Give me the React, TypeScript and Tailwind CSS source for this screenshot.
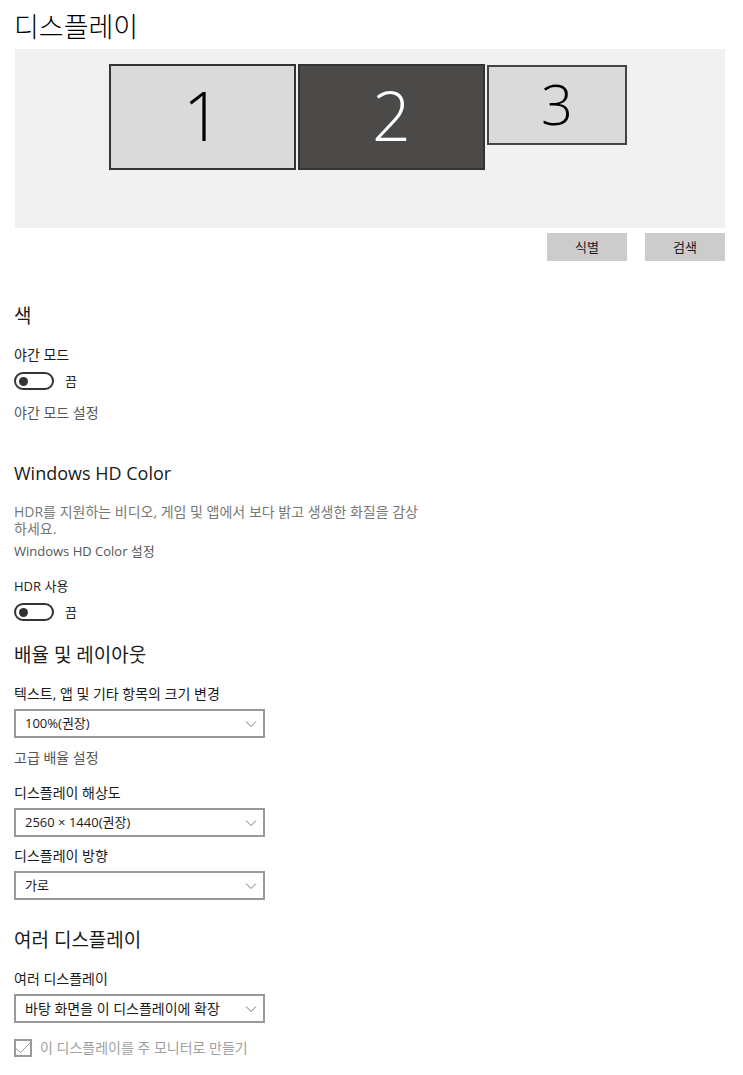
import { useState } from "react";
import type { ReactNode } from "react";

function SectionTitle({ children, className = "text-[19px]" }: { children: ReactNode; className?: string }) {
    return <h2 className={`${className} leading-7 text-[#1a1a1a]`}>{children}</h2>;
}

function Toggle({ id, label, labelClass = "text-sm" }: { id: string; label: string; labelClass?: string }) {
    const [on, setOn] = useState(false);

    return (
        <div>
            <label htmlFor={id} className={`${labelClass} block leading-5`}>{label}</label>
            <div className="mt-[7px] flex h-[18px] items-center gap-[11px]">
                <input
                    id={id}
                    type="checkbox"
                    role="switch"
                    checked={on}
                    onChange={(e) => setOn(e.target.checked)}
                    className="peer sr-only"
                />
                <label
                    htmlFor={id}
                    className="flex h-[18px] w-10 items-center rounded-full border-2 border-[#333] px-[3px] peer-checked:justify-end"
                >
                    <span className="size-[9px] rounded-full bg-[#333]" />
                </label>
                <span className="text-[13px] leading-5">{on ? "켬" : "끔"}</span>
            </div>
        </div>
    );
}

type SelectFieldProps = {
    id: string;
    label: string;
    options: string[];
    className?: string;
};

function SelectField({ id, label, options, className = "text-sm" }: SelectFieldProps) {
    return (
        <div>
            <label htmlFor={id} className="block leading-5">{label}</label>
            <div className="mt-[5px] grid w-full max-w-[251px] items-center">
                <select
                    id={id}
                    className={`${className} col-start-1 row-start-1 h-[29px] w-full appearance-none border-2 border-[#999] bg-white pr-8 pl-[9px]`}
                >
                    {options.map((option) => (
                        <option key={option}>{option}</option>
                    ))}
                </select>
                <svg
                    className="pointer-events-none col-start-1 row-start-1 mr-2 justify-self-end"
                    width="12"
                    height="8"
                    viewBox="0 0 12 8"
                    fill="none"
                    stroke="#777"
                >
                    <path d="M1 1.5 6 6.5 11 1.5" />
                </svg>
            </div>
        </div>
    );
}

function Monitors() {
    return (
        <div className="flex h-[179px] items-start justify-center gap-0.5 bg-[#f1f1f1] pt-[15px] pr-1 font-light">
            <button className="h-[106px] w-[187px] border-2 border-[#333] bg-[#dadada] pb-1 text-[68px] leading-none text-black">1</button>
            <button className="h-[106px] w-[187px] border-2 border-[#333] bg-[#4b4a48] pb-1 text-[68px] leading-none text-white">2</button>
            <button className="mt-px h-20 w-[140px] border-2 border-[#444] bg-[#dadada] pb-1 text-[56px] leading-none text-black">3</button>
        </div>
    );
}

export default function App() {
    return (
        <main className="min-h-screen bg-white pt-[7px] pr-[18px] pb-4 pl-[14px] font-['Open_Sans','Noto_Sans_CJK_KR',sans-serif] text-sm text-[#1a1a1a]">
            <h1 className="text-[27px] leading-10 font-light text-black">디스플레이</h1>
            <div className="mt-0.5 pl-px">
                <Monitors />
            </div>
            <div className="mt-[5px] flex justify-end gap-[18px] text-[13px]">
                <button className="h-7 w-20 bg-[#ccc]">식별</button>
                <button className="h-7 w-20 bg-[#ccc]">검색</button>
            </div>

            <section className="mt-[41px]">
                <SectionTitle>색</SectionTitle>
                <div className="mt-[15px]">
                    <Toggle id="night" label="야간 모드" />
                </div>
                <a href="#night-settings" className="mt-[13px] block leading-5 text-[#555]">야간 모드 설정</a>
            </section>

            <section className="mt-9">
                <SectionTitle className="text-lg">Windows HD Color</SectionTitle>
                <p className="mt-4 max-w-[410px] leading-[17px] text-[#777]">
                    HDR를 지원하는 비디오, 게임 및 앱에서 보다 밝고 생생한 화질을 감상하세요.
                </p>
                <a href="#hd-color" className="mt-1 block text-[13px] leading-5 text-[#555]">Windows HD Color 설정</a>
                <div className="mt-[15px]">
                    <Toggle id="hdr" label="HDR 사용" labelClass="text-[13px]" />
                </div>
            </section>

            <section className="mt-5">
                <SectionTitle>배율 및 레이아웃</SectionTitle>
                <div className="mt-[15px]">
                    <SelectField id="scale" label="텍스트, 앱 및 기타 항목의 크기 변경" options={["100%(권장)", "125%", "150%"]} className="text-[13px]" />
                </div>
                <a href="#scaling" className="mt-[10px] block leading-5 text-[#555]">고급 배율 설정</a>
                <div className="mt-[15px] flex flex-col gap-[9px]">
                    <SelectField id="resolution" label="디스플레이 해상도" options={["2560 × 1440(권장)", "1920 × 1080"]} className="text-[13px]" />
                    <SelectField id="orientation" label="디스플레이 방향" options={["가로", "세로"]} className="text-[13px]" />
                </div>
            </section>

            <section className="mt-[26px]">
                <SectionTitle>여러 디스플레이</SectionTitle>
                <div className="mt-[15px]">
                    <SelectField id="multiple" label="여러 디스플레이" options={["바탕 화면을 이 디스플레이에 확장", "디스플레이 복제"]} />
                </div>
                <div className="mt-4 flex h-[18px] items-center gap-2">
                    <div className="grid size-[18px]">
                        <input
                            id="main-display"
                            type="checkbox"
                            defaultChecked
                            disabled
                            className="col-start-1 row-start-1 size-[18px] appearance-none border-2 border-[#999]"
                        />
                        <svg className="pointer-events-none col-start-1 row-start-1" width="18" height="18" viewBox="0 0 18 18" fill="none" stroke="#999">
                            <path d="M2 9.5 6.5 13.5 16 4" />
                        </svg>
                    </div>
                    <label htmlFor="main-display" className="leading-5 text-[#a0a0a0]">이 디스플레이를 주 모니터로 만들기</label>
                </div>
            </section>
        </main>
    );
}
